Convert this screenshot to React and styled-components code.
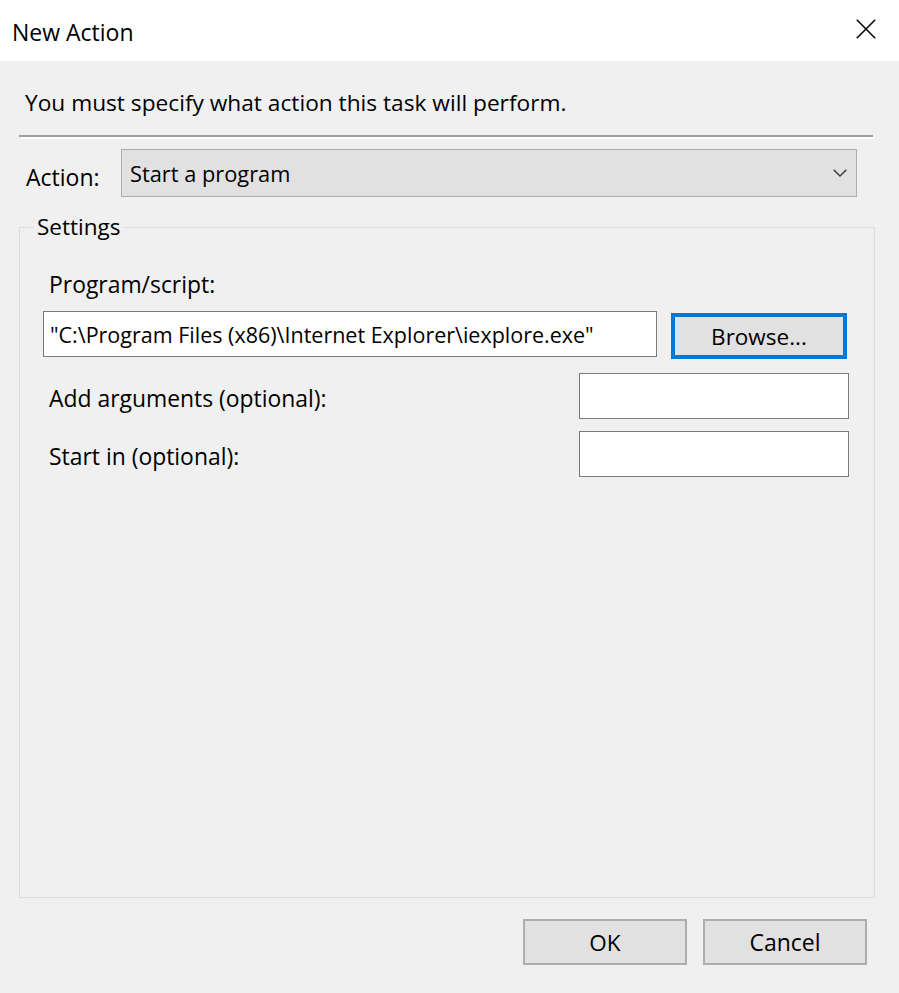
import React from "react";
import styled, { createGlobalStyle } from "styled-components";

const Global = createGlobalStyle`
  html, body { margin: 0; padding: 0; }
  body {
    background: #f0f0f0;
    font-family: "Open Sans", "Noto Sans", sans-serif;
    color: #000;
  }
  * { box-sizing: border-box; }
`;

const Window = styled.div`
  width: 899px;
  height: 993px;
  display: flex;
  flex-direction: column;
  background: #f0f0f0;
  overflow: hidden;
`;

const TitleBar = styled.div`
  height: 61px;
  flex: none;
  background: #fff;
  display: flex;
  align-items: center;
  justify-content: space-between;
  padding: 0 23px 0 12px;
`;

const Title = styled.div`
  font-size: 23px;
  line-height: 28px;
  margin-top: 2px;
`;

const CloseIcon = styled.svg`
  width: 20px;
  height: 20px;
  display: block;
  margin-top: -4px;
`;

const Content = styled.div`
  display: flex;
  flex-direction: column;
  padding: 0 24px 0 19px;
`;

const Instruction = styled.div`
  margin-top: 28px;
  padding-left: 6px;
  font-size: 22.7px;
  line-height: 28px;
`;

const Separator = styled.div`
  margin-top: 18px;
  margin-right: 2px;
  height: 2px;
  background: #a0a0a0;
  box-shadow: 2px 2px 0 #fff;
`;

const ActionRow = styled.div`
  margin-top: 12px;
  display: flex;
  align-items: center;
`;

const ActionLabel = styled.div`
  width: 102px;
  padding-left: 7px;
  padding-top: 7px;
  font-size: 23px;
  line-height: 28px;
`;

const Combo = styled.div`
  width: 736px;
  height: 48px;
  background: #e1e1e1;
  border: 1px solid #adadad;
  display: flex;
  align-items: center;
  justify-content: space-between;
  padding: 0 9px 0 8px;
  font-size: 21.8px;
`;

const Chevron = styled.svg`
  width: 14px;
  height: 8px;
  display: block;
`;

const Group = styled.fieldset`
  margin: 16px 0 0 0;
  min-width: 0;
  height: 685px;
  border: 1px solid #dcdcdc;
  padding: 0;
`;

const Legend = styled.legend`
  margin-left: 13px;
  padding: 0 4px;
  font-size: 22.5px;
  line-height: 28px;
`;

const GroupBody = styled.div`
  display: flex;
  flex-direction: column;
  padding: 0 25px 0 23px;
`;

const FieldLabel = styled.div`
  padding-left: 6px;
  font-size: 22.9px;
  line-height: 28px;
  margin-top: ${(p) => p.$top || 0}px;
  padding-top: ${(p) => p.$shift || 0}px;
`;

const ProgramRow = styled.div`
  margin-top: 12px;
  display: flex;
  align-items: flex-start;
  gap: 14px;
`;

const TextBox = styled.div`
  width: ${(p) => p.$w}px;
  height: 46px;
  background: #fff;
  border: 1px solid #7a7a7a;
  display: flex;
  align-items: center;
  padding-left: 6px;
  font-size: 21.5px;
  white-space: nowrap;
  overflow: hidden;
`;

const Button = styled.button`
  width: ${(p) => p.$w || 164}px;
  height: 46px;
  background: #e1e1e1;
  border: ${(p) => (p.$focused ? "4px solid #0078d7" : "2px solid #adadad")};
  font-family: inherit;
  font-size: ${(p) => p.$fs || 22.5}px;
  color: #000;
  padding: 0;
  margin-top: ${(p) => p.$mt || 0}px;
  cursor: default;
`;

const OptionRow = styled.div`
  margin-top: ${(p) => p.$top}px;
  display: flex;
  align-items: center;
  justify-content: space-between;
`;

const Footer = styled.div`
  margin-top: 21px;
  display: flex;
  justify-content: flex-end;
  gap: 16px;
  padding-right: 8px;
`;

export default function App() {
  return (
    <>
      <Global />
      <Window>
        <TitleBar>
          <Title>New Action</Title>
          <CloseIcon viewBox="0 0 20 20">
            <path d="M0.8 0.8 L19.2 19.2 M19.2 0.8 L0.8 19.2" stroke="#000" strokeWidth="1.5" fill="none" />
          </CloseIcon>
        </TitleBar>
        <Content>
          <Instruction>You must specify what action this task will perform.</Instruction>
          <Separator />
          <ActionRow>
            <ActionLabel>Action:</ActionLabel>
            <Combo>
              <span>Start a program</span>
              <Chevron viewBox="0 0 14 8">
                <path d="M0.7 0.7 L7 7 L13.3 0.7" stroke="#333" strokeWidth="1.3" fill="none" />
              </Chevron>
            </Combo>
          </ActionRow>
          <Group>
            <Legend>Settings</Legend>
            <GroupBody>
              <FieldLabel $top={30}>Program/script:</FieldLabel>
              <ProgramRow>
                <TextBox $w={614}>"C:\Program Files (x86)\Internet Explorer\iexplore.exe"</TextBox>
                <Button $w={176} $focused $mt={2}>Browse...</Button>
              </ProgramRow>
              <OptionRow $top={14}>
                <FieldLabel $shift={6}>Add arguments (optional):</FieldLabel>
                <TextBox $w={270} />
              </OptionRow>
              <OptionRow $top={12}>
                <FieldLabel $shift={6}>Start in (optional):</FieldLabel>
                <TextBox $w={270} />
              </OptionRow>
            </GroupBody>
          </Group>
          <Footer>
            <Button>OK</Button>
            <Button $fs={23}>Cancel</Button>
          </Footer>
        </Content>
      </Window>
    </>
  );
}
